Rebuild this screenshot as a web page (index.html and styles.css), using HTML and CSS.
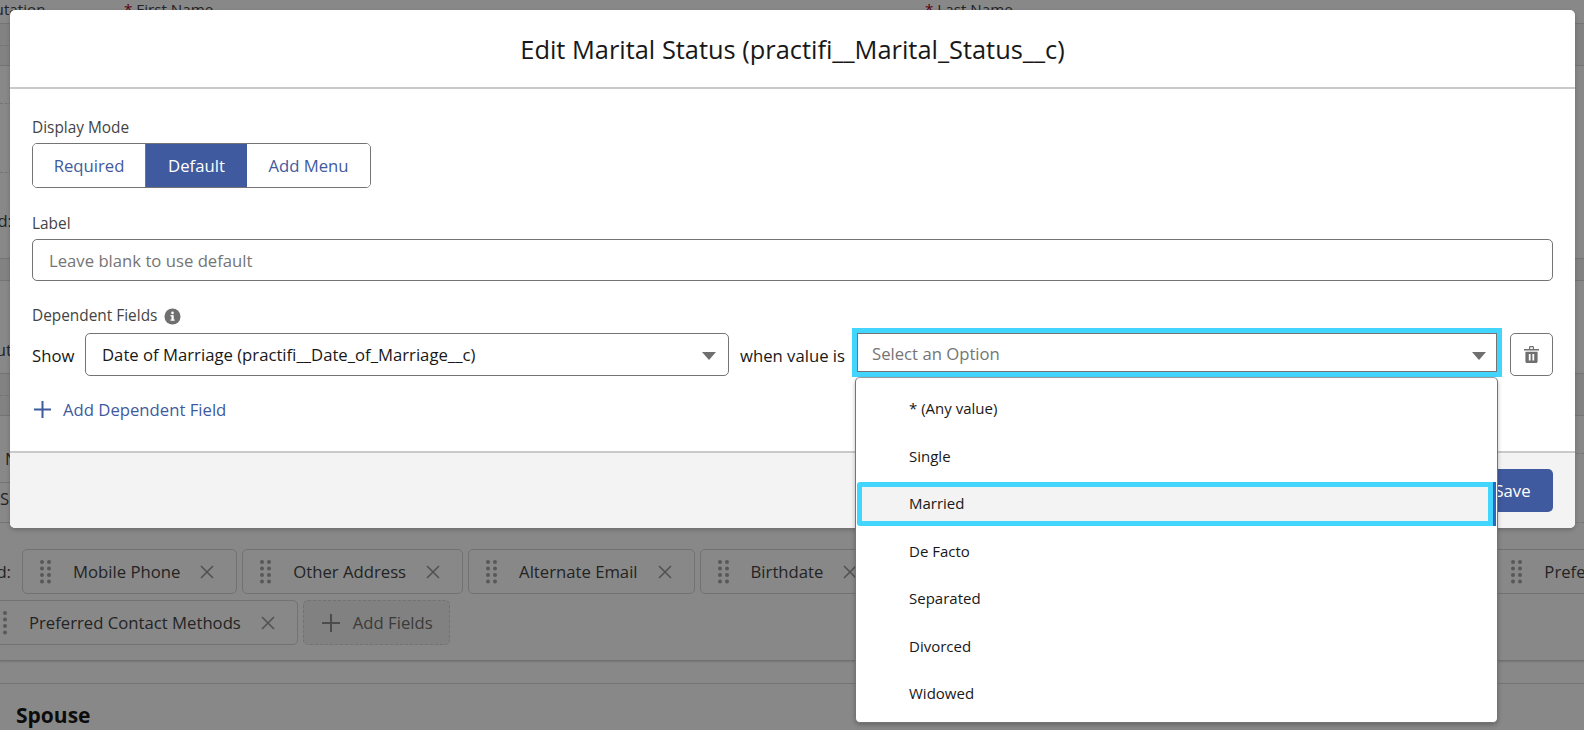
FILE: index.html
```html
<!DOCTYPE html>
<html lang="en">
<head>
    <meta charset="UTF-8">
    <meta name="viewport" content="width=device-width, initial-scale=1.0">
    <title>Edit Marital Status</title>
    <link rel="stylesheet" href="styles.css">
</head>
<body>
    <div class="page">
        <div class="top-labels">
            <span class="top-label salutation">Salutation</span>
            <span class="top-label first-name"><span class="req">*</span> First Name</span>
            <span class="top-label last-name"><span class="req">*</span> Last Name</span>
        </div>

        <div class="strips">
            <div class="strip">
                <div class="band h22 shade dashed"></div>
                <div class="band h20 shade"></div>
                <div class="band h38 dashed"></div>
                <div class="band h69 dashed"></div>
                <div class="band h86"><span class="strip-text up">Add Fields to Record:</span></div>
                <div class="band h22 shade"></div>
                <div class="band h93"><span class="strip-text">Layout</span></div>
                <div class="band h22 shade dashed"></div>
                <div class="band h20 shade"></div>
                <div class="band h67 start"><span class="strip-text name-text">Name</span></div>
                <div class="band h40 start"><span class="strip-text">Search</span></div>
            </div>
            <div class="strip">
                <div class="band h42 shade"></div>
                <div class="band h193"></div>
                <div class="band h22 shade"></div>
                <div class="band h93"></div>
                <div class="band h42 shade"></div>
                <div class="band h38 dashed"></div>
                <div class="band h69 dashed"></div>
            </div>
        </div>

        <div class="chip-section">
            <div class="chip-row">
                <span class="row-label">Add Fields to Record:</span>
                <div class="chip">
                    <svg class="grip" viewBox="0 0 11 24"><circle cx="2" cy="2" r="2"/><circle cx="9" cy="2" r="2"/><circle cx="2" cy="8.5" r="2"/><circle cx="9" cy="8.5" r="2"/><circle cx="2" cy="15" r="2"/><circle cx="9" cy="15" r="2"/><circle cx="2" cy="21.5" r="2"/><circle cx="9" cy="21.5" r="2"/></svg>
                    <span>Mobile Phone</span>
                    <svg class="close" viewBox="0 0 14 14"><path d="M1 1l12 12M13 1L1 13"/></svg>
                </div>
                <div class="chip">
                    <svg class="grip" viewBox="0 0 11 24"><circle cx="2" cy="2" r="2"/><circle cx="9" cy="2" r="2"/><circle cx="2" cy="8.5" r="2"/><circle cx="9" cy="8.5" r="2"/><circle cx="2" cy="15" r="2"/><circle cx="9" cy="15" r="2"/><circle cx="2" cy="21.5" r="2"/><circle cx="9" cy="21.5" r="2"/></svg>
                    <span>Other Address</span>
                    <svg class="close" viewBox="0 0 14 14"><path d="M1 1l12 12M13 1L1 13"/></svg>
                </div>
                <div class="chip">
                    <svg class="grip" viewBox="0 0 11 24"><circle cx="2" cy="2" r="2"/><circle cx="9" cy="2" r="2"/><circle cx="2" cy="8.5" r="2"/><circle cx="9" cy="8.5" r="2"/><circle cx="2" cy="15" r="2"/><circle cx="9" cy="15" r="2"/><circle cx="2" cy="21.5" r="2"/><circle cx="9" cy="21.5" r="2"/></svg>
                    <span>Alternate Email</span>
                    <svg class="close" viewBox="0 0 14 14"><path d="M1 1l12 12M13 1L1 13"/></svg>
                </div>
                <div class="chip">
                    <svg class="grip" viewBox="0 0 11 24"><circle cx="2" cy="2" r="2"/><circle cx="9" cy="2" r="2"/><circle cx="2" cy="8.5" r="2"/><circle cx="9" cy="8.5" r="2"/><circle cx="2" cy="15" r="2"/><circle cx="9" cy="15" r="2"/><circle cx="2" cy="21.5" r="2"/><circle cx="9" cy="21.5" r="2"/></svg>
                    <span>Birthdate</span>
                    <svg class="close" viewBox="0 0 14 14"><path d="M1 1l12 12M13 1L1 13"/></svg>
                </div>
                <div class="chip chip-far">
                    <svg class="grip" viewBox="0 0 11 24"><circle cx="2" cy="2" r="2"/><circle cx="9" cy="2" r="2"/><circle cx="2" cy="8.5" r="2"/><circle cx="9" cy="8.5" r="2"/><circle cx="2" cy="15" r="2"/><circle cx="9" cy="15" r="2"/><circle cx="2" cy="21.5" r="2"/><circle cx="9" cy="21.5" r="2"/></svg>
                    <span>Preferred Name</span>
                </div>
            </div>
            <div class="chip-row second">
                <div class="chip">
                    <svg class="grip" viewBox="0 0 11 24"><circle cx="2" cy="2" r="2"/><circle cx="9" cy="2" r="2"/><circle cx="2" cy="8.5" r="2"/><circle cx="9" cy="8.5" r="2"/><circle cx="2" cy="15" r="2"/><circle cx="9" cy="15" r="2"/><circle cx="2" cy="21.5" r="2"/><circle cx="9" cy="21.5" r="2"/></svg>
                    <span>Preferred Contact Methods</span>
                    <svg class="close" viewBox="0 0 14 14"><path d="M1 1l12 12M13 1L1 13"/></svg>
                </div>
                <div class="chip add-chip">
                    <svg class="plus" viewBox="0 0 18 18"><path d="M9 0v18M0 9h18"/></svg>
                    <span>Add Fields</span>
                </div>
            </div>
        </div>

        <div class="spouse-section">
            <h2>Spouse</h2>
        </div>
    </div>

    <div class="backdrop"></div>

    <div class="modal">
        <div class="modal-header">
            <h1>Edit Marital Status (practifi__Marital_Status__c)</h1>
        </div>

        <div class="modal-body">
            <div class="field-label">Display Mode</div>
            <div class="btn-group">
                <button class="btn-required">Required</button>
                <button class="btn-default active">Default</button>
                <button class="btn-menu">Add Menu</button>
            </div>

            <div class="field-label label-gap">Label</div>
            <div class="text-input">Leave blank to use default</div>

            <div class="field-label dep-label">
                Dependent Fields
                <svg class="info" viewBox="0 0 18 18"><circle cx="9" cy="9" r="8.5"/><rect x="7.9" y="7.6" width="2.4" height="5.6" fill="#fff"/><rect x="6.8" y="7.6" width="2" height="1.2" fill="#fff"/><rect x="6.8" y="12.2" width="4.6" height="1.2" fill="#fff"/><circle cx="9" cy="5.2" r="1.4" fill="#fff"/></svg>
            </div>
            <div class="dep-row">
                <span class="dep-show">Show</span>
                <div class="select dep-select">
                    <span>Date of Marriage (practifi__Date_of_Marriage__c)</span>
                    <span class="arrow"></span>
                </div>
                <span class="dep-when">when value is</span>
                <div class="combo">
                    <div class="select combo-input">
                        <span class="placeholder">Select an Option</span>
                        <span class="arrow"></span>
                    </div>
                    <ul class="menu">
                        <li>* (Any value)</li>
                        <li>Single</li>
                        <li class="active">Married</li>
                        <li>De Facto</li>
                        <li>Separated</li>
                        <li>Divorced</li>
                        <li>Widowed</li>
                    </ul>
                </div>
                <div class="trash-btn">
                    <svg viewBox="0 0 15 17"><path d="M0 3h15v1.6H0zM5 3V1.4C5 .6 5.6 0 6.4 0h2.2C9.400 0 10 .6 10 1.400V3H8.800V1.200H6.200V3zM1.400 5.800h12.200v9.700c0 .8-.7 1.500-1.500 1.500H2.900c-.8 0-1.500-.7-1.500-1.500zM4.800 8v6.500h1.800V8zM8.400 8v6.500h1.800V8z" fill-rule="evenodd"/></svg>
                </div>
            </div>

            <div class="add-dep">
                <svg viewBox="0 0 17 17"><path d="M8.500 0v17M0 8.500h17"/></svg>
                <span>Add Dependent Field</span>
            </div>
        </div>

        <div class="modal-footer">
            <button class="save-btn">Save</button>
        </div>
    </div>
</body>
</html>
```

FILE: styles.css
```css
* {
    box-sizing: border-box;
}
html, body {
    margin: 0;
    padding: 0;
    height: 730px;
    overflow: hidden;
}
body {
    position: relative;
    background-color: #fff;
    font-family: "Open Sans", "Noto Sans", Arial, sans-serif;
    font-size: 16.7px;
    color: #181818;
}

/* page behind the dialog */
.page {
    height: 730px;
    overflow: hidden;
}
.top-labels {
    display: flex;
    height: 24px;
    border-bottom: 1px solid #d9d9d9;
    font-size: 15.2px;
    line-height: 18px;
    color: #444;
}
.top-label {
    display: block;
    white-space: nowrap;
}
.salutation {
    margin-left: -26px;
    width: 150px;
}
.first-name {
    width: 801px;
}
.req {
    color: #b00020;
}
.strips {
    display: flex;
    justify-content: space-between;
    height: 525px;
}
.strip {
    width: 12px;
    overflow: hidden;
}
.band {
    display: flex;
    align-items: flex-end;
    justify-content: flex-end;
    border-bottom: 1px solid #d9d9d9;
    white-space: nowrap;
    color: #444;
    line-height: 30px;
}
.band.start {
    justify-content: flex-start;
}
.band.dashed {
    border-bottom-style: dashed;
}
.band.shade {
    background-color: #f4f4f4;
}
.h20 { height: 20px; }
.h22 { height: 22px; }
.h38 { height: 38px; }
.h40 { height: 40px; }
.h42 { height: 42px; }
.h67 { height: 67px; }
.h69 { height: 69px; }
.h86 { height: 86px; }
.h93 { height: 93px; }
.h193 { height: 193px; }
.strip-text {
    margin-bottom: 8px;
}
.strip-text.up {
    margin-bottom: 22px;
}
.name-text {
    margin-left: 5px;
}

.chip-section {
    height: 112px;
    padding-bottom: 16px;
    border-bottom: 1px solid #d0d0d0;
    box-shadow: 0 1px 2px rgba(0, 0, 0, .15);
}
.chip-row {
    display: flex;
    gap: 5px;
    height: 45px;
    white-space: nowrap;
}
.chip-row.second {
    margin-top: 6px;
    margin-left: -22px;
}
.row-label {
    flex-shrink: 0;
    width: 167px;
    margin-left: -156px;
    margin-right: 6px;
    text-align: right;
    line-height: 45px;
    color: #444;
}
.chip {
    display: flex;
    flex-shrink: 0;
    align-items: center;
    height: 45px;
    padding: 0 22px 0 17px;
    border: 1px solid #d6d6d6;
    border-radius: 5px;
    color: #444;
}
.chip-far {
    margin-left: 608px;
}
.grip {
    width: 11px;
    height: 24px;
    margin-right: 22px;
    fill: #a6a6a6;
}
.close {
    width: 14px;
    height: 14px;
    margin-left: 20px;
    fill: none;
    stroke: #999;
    stroke-width: 1.6;
}
.add-chip {
    padding: 0 16px 0 18px;
    border-style: dashed;
    background-color: #f2f2f2;
    color: #6f6f6f;
}
.plus {
    width: 18px;
    height: 18px;
    margin-right: 13px;
    fill: none;
    stroke: #8f8f8f;
    stroke-width: 2;
}
.spouse-section {
    margin-top: 22px;
    border-top: 1px solid #d9d9d9;
}
.spouse-section h2 {
    margin: 18px 0 0 16px;
    font-size: 21px;
    line-height: 26px;
    font-weight: 700;
}
.backdrop {
    position: absolute;
    top: 0;
    left: 0;
    right: 0;
    bottom: 0;
    background-color: rgba(0, 0, 0, .465);
}

/* dialog */
.modal {
    position: absolute;
    top: 10px;
    left: 10px;
    width: 1565px;
    height: 518px;
    display: flex;
    flex-direction: column;
    background-color: #fff;
    border-radius: 5px;
    box-shadow: 0 2px 4px rgba(0, 0, 0, .2);
}
.modal-header {
    display: flex;
    align-items: center;
    justify-content: center;
    height: 79px;
    border-bottom: 2px solid #c9c9c9;
}
.modal-header h1 {
    margin: 0;
    font-size: 25.4px;
    font-weight: 400;
}
.modal-body {
    flex: 1;
    padding: 29px 22px 0;
}
.field-label {
    height: 20px;
    margin-bottom: 5px;
    font-size: 15.4px;
    line-height: 20px;
    color: #444;
}
.label-gap {
    margin-top: 26px;
}
.btn-group {
    display: flex;
    width: 339px;
    height: 45px;
    border: 1px solid #747474;
    border-radius: 5px;
    overflow: hidden;
}
.btn-group button {
    padding: 0;
    border: none;
    background-color: #fff;
    font: inherit;
    color: #3f5a9e;
}
.btn-required {
    width: 113px;
    border-right: 1px solid #747474 !important;
}
.btn-default {
    width: 101px;
}
.btn-menu {
    flex: 1;
}
.btn-group button.active {
    background-color: #3f5a9e;
    color: #fff;
}
.text-input {
    height: 42px;
    padding-left: 16px;
    border: 1px solid #747474;
    border-radius: 5px;
    line-height: 41px;
    color: #757575;
}
.dep-label {
    display: flex;
    align-items: center;
    gap: 7px;
    margin-top: 25px;
    margin-bottom: 7px;
}
.info {
    width: 17px;
    height: 17px;
    fill: #6f6f6f;
}
.dep-row {
    display: flex;
    height: 43px;
}
.dep-show {
    width: 53px;
    line-height: 46px;
}
.select {
    display: flex;
    align-items: center;
    justify-content: space-between;
    padding: 0 12px 0 16px;
    border: 1px solid #747474;
    border-radius: 5px;
}
.dep-select {
    width: 644px;
    height: 43px;
}
.dep-select .arrow {
    margin-top: 2px;
}
.dep-when {
    width: 128px;
    padding-left: 11px;
    line-height: 46px;
    white-space: nowrap;
}
.arrow {
    width: 0;
    height: 0;
    border-left: 7px solid transparent;
    border-right: 7px solid transparent;
    border-top: 8px solid #6f6f6f;
}
.combo {
    position: relative;
    width: 640px;
}
.combo-input {
    height: 39px;
    padding: 2px 10px 0 14px;
    border-radius: 0;
    outline: 5px solid #42d6ff;
}
.combo-input .arrow {
    margin-top: 4px;
}
.placeholder {
    color: #757575;
}
.menu {
    position: absolute;
    top: 44px;
    left: -2px;
    width: 643px;
    height: 346px;
    margin: 0;
    padding: 7px 0 0;
    list-style: none;
    background-color: #fff;
    border: 1px solid #747474;
    border-top-color: #9a9a9a;
    border-radius: 5px;
    box-shadow: 0 2px 4px rgba(0, 0, 0, .25);
    font-size: 15px;
    color: #181818;
}
.menu li {
    height: 47.5px;
    padding-left: 53px;
    line-height: 47px;
}
.menu li.active {
    height: 44px;
    margin: 2px 4px 1.5px 1px;
    padding-left: 47px;
    border: 5px solid #42d6ff;
    border-radius: 3px 0 0 3px;
    background-color: #f3f3f3;
    line-height: 33px;
    box-shadow: 3px 0 0 #2b68c4;
}
.trash-btn {
    display: flex;
    align-items: center;
    justify-content: center;
    width: 43px;
    height: 43px;
    margin-left: 13px;
    border: 1px solid #747474;
    border-radius: 5px;
}
.trash-btn svg {
    width: 15px;
    height: 17px;
    fill: #6f6f6f;
}
.add-dep {
    display: flex;
    align-items: center;
    gap: 12px;
    height: 24px;
    margin-top: 21px;
    padding-left: 2px;
    color: #3f5a9e;
}
.add-dep svg {
    width: 17px;
    height: 17px;
    fill: none;
    stroke: #3f5a9e;
    stroke-width: 2;
}
.modal-footer {
    display: flex;
    align-items: center;
    justify-content: flex-end;
    height: 77px;
    padding: 0 22px;
    border-top: 2px solid #c9c9c9;
    border-radius: 0 0 5px 5px;
    background-color: #f3f3f3;
}
.save-btn {
    width: 81px;
    height: 43px;
    padding: 0;
    border: none;
    border-radius: 5px;
    background-color: #3f5a9e;
    font: inherit;
    color: #fff;
}
```
